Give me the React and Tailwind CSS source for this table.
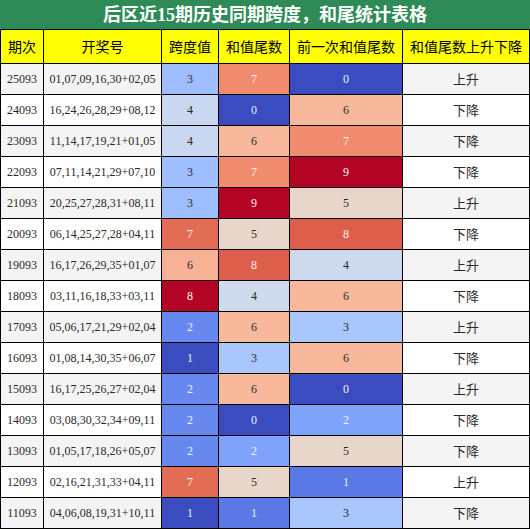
import React from "react";

const rows = [
  ["25093", "01,07,09,16,30+02,05", 3, 7, 0, "上升"],
  ["24093", "16,24,26,28,29+08,12", 4, 0, 6, "下降"],
  ["23093", "11,14,17,19,21+01,05", 4, 6, 7, "下降"],
  ["22093", "07,11,14,21,29+07,10", 3, 7, 9, "下降"],
  ["21093", "20,25,27,28,31+08,11", 3, 9, 5, "上升"],
  ["20093", "06,14,25,27,28+04,11", 7, 5, 8, "下降"],
  ["19093", "16,17,26,29,35+01,07", 6, 8, 4, "上升"],
  ["18093", "03,11,16,18,33+03,11", 8, 4, 6, "下降"],
  ["17093", "05,06,17,21,29+02,04", 2, 6, 3, "上升"],
  ["16093", "01,08,14,30,35+06,07", 1, 3, 6, "下降"],
  ["15093", "16,17,25,26,27+02,04", 2, 6, 0, "上升"],
  ["14093", "03,08,30,32,34+09,11", 2, 0, 2, "下降"],
  ["13093", "01,05,17,18,26+05,07", 2, 2, 5, "下降"],
  ["12093", "02,16,21,31,33+04,11", 7, 5, 1, "上升"],
  ["11093", "04,06,08,19,31+10,11", 1, 1, 3, "下降"],
];

const tailColors = {
  0: "bg-[#3b4cc0] text-[#eef0ff]",
  1: "bg-[#5a79e4] text-[#eef0ff]",
  2: "bg-[#7fa2fa] text-[#eef0ff]",
  3: "bg-[#a9c6fd] text-[#2a2a2a]",
  4: "bg-[#cdd9ec] text-[#2a2a2a]",
  5: "bg-[#e8d6cb] text-[#2a2a2a]",
  6: "bg-[#f7b89c] text-[#2a2a2a]",
  7: "bg-[#f08b6e] text-[#fff4ee]",
  8: "bg-[#dd5e4b] text-[#fff4ee]",
  9: "bg-[#b40426] text-[#fff4ee]",
};

const spanColors = {
  1: "bg-[#3b4cc0] text-[#eef0ff]",
  2: "bg-[#6788ee] text-[#eef0ff]",
  3: "bg-[#9ebeff] text-[#2a2a2a]",
  4: "bg-[#c9d7f0] text-[#2a2a2a]",
  5: "bg-[#edd1c2] text-[#2a2a2a]",
  6: "bg-[#f7b194] text-[#2a2a2a]",
  7: "bg-[#e36c55] text-[#fff4ee]",
  8: "bg-[#b40426] text-[#fff4ee]",
};

const headers = ["期次", "开奖号", "跨度值", "和值尾数", "前一次和值尾数", "和值尾数上升下降"];

export default function App() {
  return (
    <div className="w-[530px] h-[529px] bg-white">
      <div className="h-[29px] bg-[#2e8b57] flex items-center justify-center text-white font-bold text-[18px] leading-none font-['Liberation_Serif','Noto_Sans_CJK_SC',serif]">
        后区近15期历史同期跨度，和尾统计表格
      </div>
      <div className="grid grid-cols-[42px_117px_56px_70px_112px_126px] grid-rows-[33px] auto-rows-[30px] gap-px bg-black p-px">
        {headers.map((h) => (
          <div
            key={h}
            className="bg-[#ffff00] flex items-center justify-center text-[14px] text-black font-['Noto_Sans_CJK_SC',sans-serif]"
          >
            {h}
          </div>
        ))}
        {rows.map((r, i) => {
          const base = i % 2 === 0 ? "bg-[#f4f4f4]" : "bg-white";
          const num = "flex items-center justify-center text-[12px] font-['Liberation_Serif','Noto_Sans_CJK_SC',serif]";
          return (
            <React.Fragment key={r[0]}>
              <div className={`${base} ${num} text-[#2a2a2a]`}>{r[0]}</div>
              <div className={`${base} ${num} text-[#2a2a2a]`}>{r[1]}</div>
              <div className={`${spanColors[r[2]]} ${num}`}>{r[2]}</div>
              <div className={`${tailColors[r[3]]} ${num}`}>{r[3]}</div>
              <div className={`${tailColors[r[4]]} ${num}`}>{r[4]}</div>
              <div className={`${base} flex items-center justify-center text-[13px] text-[#2a2a2a] font-['Noto_Sans_CJK_SC',sans-serif]`}>
                {r[5]}
              </div>
            </React.Fragment>
          );
        })}
      </div>
    </div>
  );
}
